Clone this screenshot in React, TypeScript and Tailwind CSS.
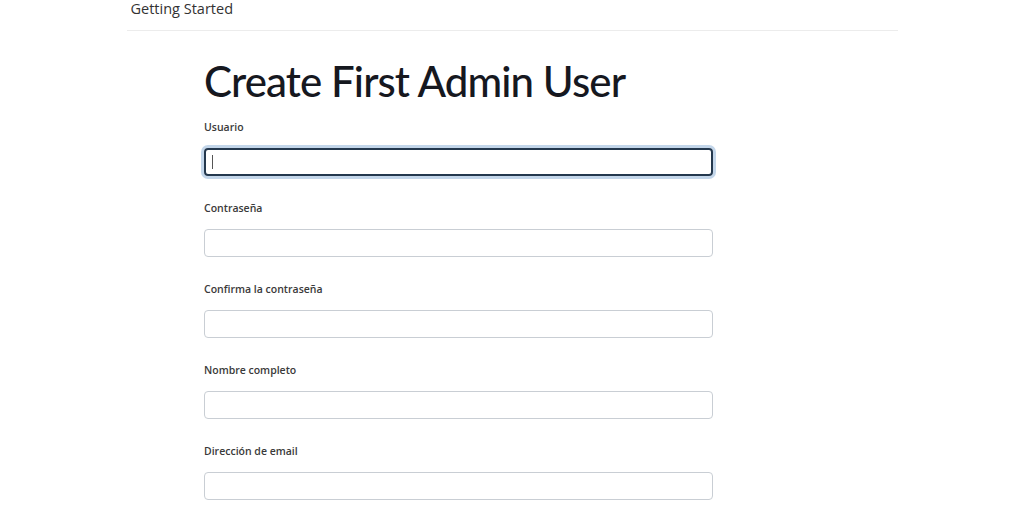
import React from "react";

const fields = [
  "Usuario",
  "Contraseña",
  "Confirma la contraseña",
  "Nombre completo",
  "Dirección de email",
];

export default function App() {
  return (
    <div
      className="w-[1024px] h-[512px] overflow-hidden bg-white text-[#212529]"
      style={{ fontFamily: '"Open Sans", "Noto Sans", sans-serif' }}
    >
      <div className="mx-auto w-[771px] h-[31px] border-b border-[#ececec] px-[4px]">
        <div className="text-[14.5px] leading-[18px] text-[#333333] font-medium">Getting Started</div>
      </div>
      <div className="ml-[204px] w-[509px]">
        <h1
          className="mt-[25px] text-[42px] leading-[51px] font-medium tracking-[-0.9px] text-[#16181f]"
          style={{ fontFamily: 'Lato, "Open Sans", sans-serif' }}
        >
          Create First Admin User
        </h1>
        <div className="mt-[13px] flex flex-col">
          {fields.map((f, i) => (
            <div key={f} className="flex flex-col h-[81px]">
              <label className="text-[10.5px] leading-[15px] font-semibold text-[#3a3a3a]">{f}</label>
              <div className="relative mt-[13px]">
                {i === 0 ? (
                  <>
                    <div className="h-[28px] w-full rounded-[4px] border-2 border-[#24384e] ring-[3px] ring-[#c3d6ea]" />
                    <div className="absolute left-[8px] top-[7px] h-[14px] w-px bg-[#555]" />
                  </>
                ) : (
                  <div className="h-[28px] w-full rounded-[4px] border border-[#c9ced4]" />
                )}
              </div>
            </div>
          ))}
        </div>
      </div>
    </div>
  );
}
